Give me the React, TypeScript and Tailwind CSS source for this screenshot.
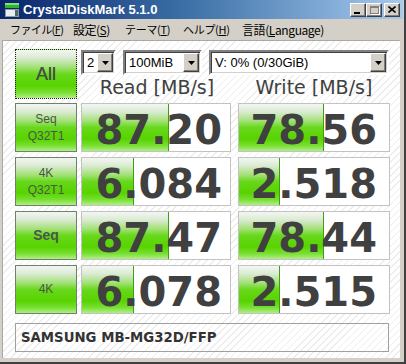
import React from "react";

// green fill used by the test buttons and the score bars
const GREEN =
  "bg-[linear-gradient(to_bottom,#f3f6f1_0%,#dcebd5_16%,#a2e176_36%,#68d81c_50%,#58d300_74%,#76df30_88%,#b0ef86_100%)]";

const rows = [
  { label: ["Seq", "Q32T1"], bold: false, read: "87.20", rw: 87, write: "78.56", ww: 85 },
  { label: ["4K", "Q32T1"], bold: false, read: "6.084", rw: 52, write: "2.518", ww: 41 },
  { label: ["Seq"], bold: true, read: "87.47", rw: 87, write: "78.44", ww: 85 },
  { label: ["4K"], bold: false, read: "6.078", rw: 52, write: "2.515", ww: 41 },
];

function TitleButton({ children }: { children: React.ReactNode }) {
  return (
    <div className="flex h-[14px] w-[16px] items-center justify-center border border-t-white border-l-white border-b-[#404040] border-r-[#404040] bg-[#d4d0c8] shadow-[inset_-1px_-1px_0_#808080]">
      {children}
    </div>
  );
}

function Combo({ className, text }: { className: string; text: string }) {
  return (
    <div
      className={`flex h-[25px] border-2 border-t-[#808080] border-l-[#808080] border-b-white border-r-white bg-white shadow-[inset_1px_1px_0_#404040,inset_-1px_-1px_0_#d4d0c8] ${className}`}
    >
      <div className="flex flex-1 items-center pl-[4px] pt-[1px] text-[13px] text-black">{text}</div>
      <div className="mt-[1px] mr-[1px] mb-[1px] flex w-[16px] items-center justify-center border border-t-white border-l-white border-b-[#404040] border-r-[#404040] bg-[#d4d0c8] shadow-[inset_-1px_-1px_0_#808080]">
        <svg width="7" height="4" viewBox="0 0 7 4">
          <path d="M0 0h7L3.5 4z" fill="#000" />
        </svg>
      </div>
    </div>
  );
}

function Score({ value, bar, className, pr }: { value: string; bar: number; className: string; pr: string }) {
  return (
    <div className={`relative h-[49px] border border-[#c2c2c2] bg-white ${className}`}>
      <div
        className={`absolute top-0 bottom-0 left-0 border-r border-r-[#3f9d12] ${GREEN}`}
        style={{ width: bar }}
      />
      <div
        className={`relative flex h-full items-start justify-end pt-[6px] ${pr} font-['DejaVu_Sans',sans-serif] text-[40px] font-bold leading-[40px] text-[#404040]`}
      >
        {value}
      </div>
    </div>
  );
}

export default function App() {
  return (
    <div className="flex h-[364px] w-[406px] flex-col border-r-2 border-b-2 border-r-[#404040] border-b-[#404040] bg-[#d4d0c8] font-['Liberation_Sans',sans-serif]">
      {/* title bar */}
      <div className="mr-[1px] flex h-[19px] items-center bg-[linear-gradient(to_right,#0a246a,#3a6ea5_45%,#a6caf0)] pl-[4px] pr-[3px]">
        <svg width="16" height="16" viewBox="0 0 16 16">
          <rect x="1" y="1" width="14" height="5" fill="#2fb52f" />
          <rect x="1" y="1" width="14" height="2" fill="#7ee07e" />
          <rect x="1" y="7" width="14" height="8" fill="#8c9a9a" />
          <rect x="2" y="8" width="9" height="6" fill="#e8eeee" />
          <rect x="11" y="8" width="3" height="6" fill="#4e6a6a" />
        </svg>
        <span className="ml-[3px] text-[13px] font-bold text-white">CrystalDiskMark 5.1.0</span>
        <div className="ml-auto flex items-center">
          <TitleButton>
            <div className="mt-[6px] mr-[2px] h-[2px] w-[6px] bg-black" />
          </TitleButton>
          <TitleButton>
            <div className="h-[8px] w-[9px] border border-t-2 border-[#808080] shadow-[1px_1px_0_#fff]" />
          </TitleButton>
          <div className="w-[2px]" />
          <TitleButton>
            <svg width="8" height="7" viewBox="0 0 8 7">
              <path d="M0.5 0.5L7.5 6.5M7.5 0.5L0.5 6.5" stroke="#000" strokeWidth="1.6" />
            </svg>
          </TitleButton>
        </div>
      </div>

      {/* menu bar */}
      <div className="flex h-[21px] items-center pl-[10px] font-['Noto_Sans_CJK_JP',sans-serif] text-[12px] text-black">
        <span className="w-[63px] shrink-0 text-[11px] tracking-[-0.6px]">
          ファイル(<u>F</u>)
        </span>
        <span className="w-[52px] shrink-0 tracking-[-0.5px]">
          設定(<u>S</u>)
        </span>
        <span className="w-[58px] shrink-0 text-[11px] tracking-[-0.3px]">
          テーマ(<u>T</u>)
        </span>
        <span className="w-[59px] shrink-0 text-[11px] tracking-[-0.3px]">
          ヘルプ(<u>H</u>)
        </span>
        <span className="tracking-[-0.4px]">
          言語(<u>L</u>anguage)
        </span>
      </div>

      {/* client area */}
      <div className="mr-[4px] mb-[4px] ml-[2px] flex-1 border-l border-t border-[#a8a8a8] bg-[repeating-linear-gradient(135deg,#ffffff_0px,#ffffff_4px,#ededed_4px,#ededed_5px)] pt-[8px] pl-[12px]">
        <div className="flex">
          <div
            className={`flex h-[50px] w-[62px] items-center justify-center border border-dotted border-[#222] ${GREEN} text-[18px] text-[#445044] [text-shadow:0_0_0.4px_#445044]`}
          >
            All
          </div>
          <div className="ml-[4px] flex flex-col">
            <div className="mt-[1px] flex gap-[7px]">
              <Combo className="w-[35px]" text="2" />
              <Combo className="w-[79px]" text="100MiB" />
              <Combo className="w-[180px]" text="V: 0% (0/30GiB)" />
            </div>
            <div className="flex h-[24px] items-center font-['DejaVu_Sans',sans-serif] text-[19px] text-[#404040]">
              <div className="w-[150px] pl-[2px] text-center">Read [MB/s]</div>
              <div className="ml-[7px] w-[152px] text-center">Write [MB/s]</div>
            </div>
          </div>
        </div>

        <div className="mt-[4px] flex flex-col gap-[5px]">
          {rows.map((r, i) => (
            <div key={i} className="flex">
              <div
                className={`flex h-[49px] w-[62px] flex-col items-center justify-center border border-[#6f806f] ${GREEN} ${
                  r.bold ? "text-[14px] font-bold" : "text-[12px]"
                } leading-[17px] text-[#4b564b]`}
              >
                {r.label.map((l) => (
                  <span key={l}>{l}</span>
                ))}
              </div>
              <Score value={r.read} bar={r.rw} className="ml-[4px] w-[150px]" pr="pr-[8px]" />
              <Score value={r.write} bar={r.ww} className="ml-[7px] w-[152px]" pr="pr-[12px]" />
            </div>
          ))}
        </div>

        <div className="mt-[9px] flex h-[29px] w-[374px] items-center border border-[#a0a0a0] pl-[5px] font-['DejaVu_Sans',sans-serif] text-[13.3px] font-bold text-[#333]">
          SAMSUNG MB-MG32D/FFP
        </div>
      </div>
    </div>
  );
}
